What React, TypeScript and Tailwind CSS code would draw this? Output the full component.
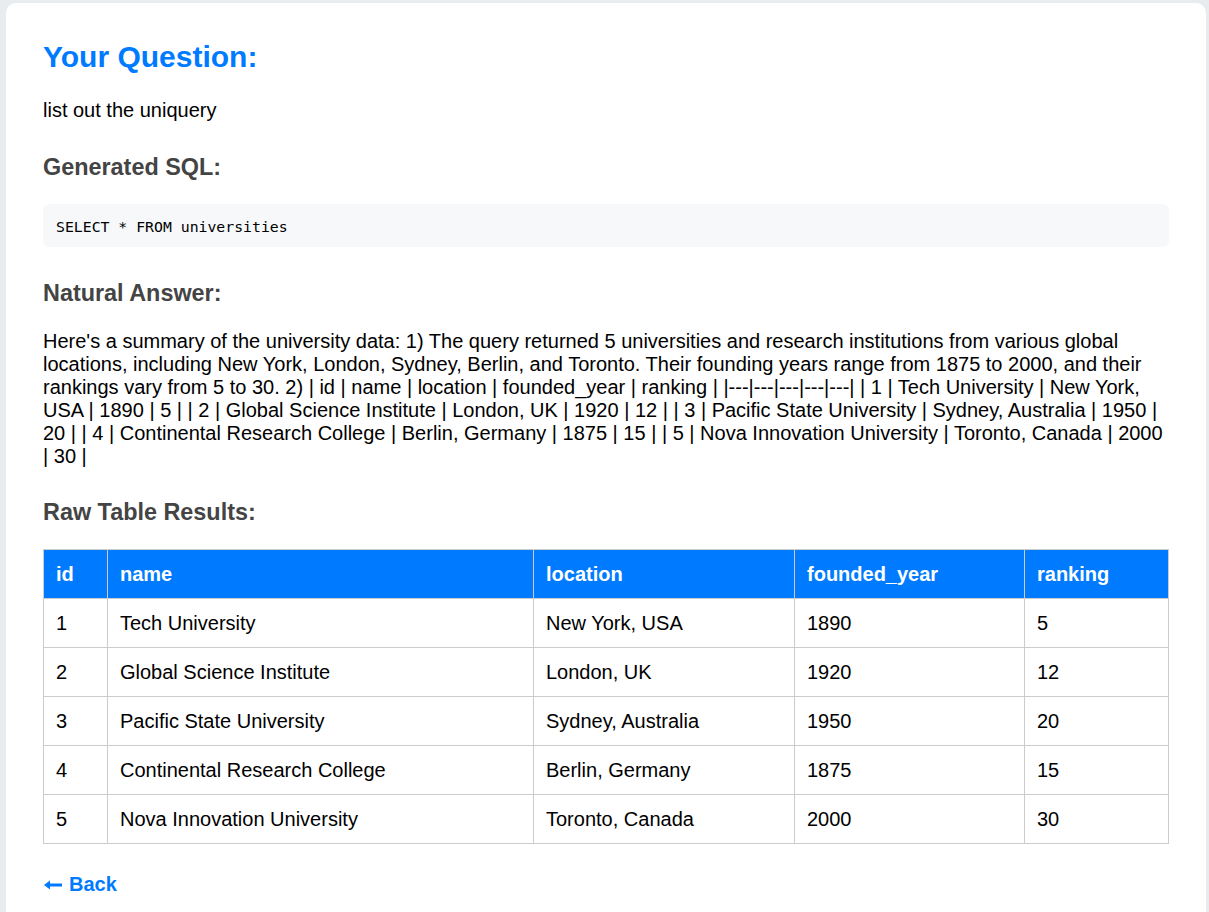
import React from "react";

const rows = [
  ["1", "Tech University", "New York, USA", "1890", "5"],
  ["2", "Global Science Institute", "London, UK", "1920", "12"],
  ["3", "Pacific State University", "Sydney, Australia", "1950", "20"],
  ["4", "Continental Research College", "Berlin, Germany", "1875", "15"],
  ["5", "Nova Innovation University", "Toronto, Canada", "2000", "30"],
];

const cols = ["id", "name", "location", "founded_year", "ranking"];
const widths = ["w-[64px]", "w-[426px]", "w-[261px]", "w-[230px]", "w-[144px]"];

export default function App() {
  return (
    <div className="min-h-[912px] bg-[#e9ecef] pl-[6px] pr-[3px] pt-[3px] font-['Liberation_Sans',Arial,sans-serif] text-[20px] text-black">
      <div className="min-h-[909px] rounded-t-[10px] bg-white px-[37px] pt-[36px] pb-[40px]">
        <h2 className="text-[30px] font-bold leading-[35px] text-[#007bff]">Your Question:</h2>
        <p className="mt-[25px] leading-[23px]">list out the uniquery</p>

        <h3 className="mt-[32px] text-[23.4px] font-bold leading-[27px] text-[#444444]">Generated SQL:</h3>
        <pre className="mt-[23px] rounded-[6px] bg-[#f6f8fa] px-[13px] pt-[14px] pb-[12px] font-['DejaVu_Sans_Mono',monospace] text-[14.8px] leading-[17px] text-black">
          SELECT * FROM universities
        </pre>

        <h3 className="mt-[32.5px] text-[23.4px] font-bold leading-[27px] text-[#444444]">Natural Answer:</h3>
        <p className="mt-[23px] leading-[23px]">
          Here's a summary of the university data: 1) The query returned 5 universities and research institutions from various global locations, including New York, London, Sydney, Berlin, and Toronto. Their founding years range from 1875 to 2000, and their rankings vary from 5 to 30. 2) | id | name | location | founded_year | ranking | |---|---|---|---|---| | 1 | Tech University | New York, USA | 1890 | 5 | | 2 | Global Science Institute | London, UK | 1920 | 12 | | 3 | Pacific State University | Sydney, Australia | 1950 | 20 | | 4 | Continental Research College | Berlin, Germany | 1875 | 15 | | 5 | Nova Innovation University | Toronto, Canada | 2000 | 30 |
        </p>

        <h3 className="mt-[31px] text-[23.4px] font-bold leading-[27px] text-[#444444]">Raw Table Results:</h3>
        <table className="mt-[23px] w-[1125px] table-fixed border-collapse">
          <thead>
            <tr>
              {cols.map((c, i) => (
                <th
                  key={c}
                  className={`${widths[i]} border border-[#cccccc] bg-[#007bff] px-[12px] py-[12px] text-left font-bold leading-[24px] text-white`}
                >
                  {c}
                </th>
              ))}
            </tr>
          </thead>
          <tbody>
            {rows.map((r) => (
              <tr key={r[0]}>
                {r.map((v, i) => (
                  <td key={i} className="border border-[#cccccc] px-[12px] py-[12px] leading-[24px]">
                    {v}
                  </td>
                ))}
              </tr>
            ))}
          </tbody>
        </table>

        <a href="#" className="mt-[29px] flex items-center gap-[7px] pl-[1px] font-bold leading-[23px] text-[#007bff] no-underline">
          <svg width="18" height="10" viewBox="0 0 18 10" className="mt-[1px]" aria-hidden="true">
            <path d="M0 5 L6 0.5 L6 9.5 Z" fill="#007bff" />
            <rect x="5" y="3.5" width="13" height="3" fill="#007bff" />
          </svg>
          <span>Back</span>
        </a>
      </div>
    </div>
  );
}
